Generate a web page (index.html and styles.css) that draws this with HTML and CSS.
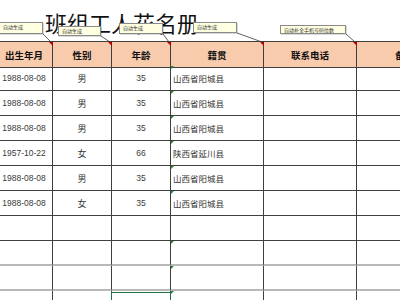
FILE: index.html
```html
<!DOCTYPE html>
<html lang="zh">
<head>
<meta charset="utf-8">
<title>班组工人花名册</title>
<link rel="stylesheet" href="styles.css">
</head>
<body>
<div class="sheet">
  <div class="title">班组工人花名册</div>
  <div class="grid">
    <div class="cell head note-mark">出生年月</div>
    <div class="cell head note-mark">性别</div>
    <div class="cell head note-mark">年龄</div>
    <div class="cell head note-mark">籍贯</div>
    <div class="cell head note-mark">联系电话</div>
    <div class="cell head">备注</div>

    <div class="cell date">1988-08-08</div><div class="cell c">男</div><div class="cell num">35</div><div class="cell place tri">山西省阳城县</div><div class="cell"></div><div class="cell"></div>
    <div class="cell date">1988-08-08</div><div class="cell c">男</div><div class="cell num">35</div><div class="cell place tri">山西省阳城县</div><div class="cell"></div><div class="cell"></div>
    <div class="cell date">1988-08-08</div><div class="cell c">男</div><div class="cell num">35</div><div class="cell place tri">山西省阳城县</div><div class="cell"></div><div class="cell"></div>
    <div class="cell date">1957-10-22</div><div class="cell c">女</div><div class="cell num">66</div><div class="cell place tri">陕西省延川县</div><div class="cell"></div><div class="cell"></div>
    <div class="cell date">1988-08-08</div><div class="cell c">男</div><div class="cell num">35</div><div class="cell place tri">山西省阳城县</div><div class="cell"></div><div class="cell"></div>
    <div class="cell date">1988-08-08</div><div class="cell c">女</div><div class="cell num">35</div><div class="cell place tri">山西省阳城县</div><div class="cell"></div><div class="cell"></div>
    <div class="cell"></div><div class="cell"></div><div class="cell"></div><div class="cell place"></div><div class="cell"></div><div class="cell"></div>
    <div class="cell light"></div><div class="cell light"></div><div class="cell light"></div><div class="cell light place tri"></div><div class="cell light"></div><div class="cell light"></div>
    <div class="cell light"></div><div class="cell light"></div><div class="cell light"></div><div class="cell light place tri"></div><div class="cell light"></div><div class="cell light"></div>
    <div class="cell light"></div><div class="cell light"></div><div class="cell light"></div><div class="cell light place tri"></div><div class="cell light"></div><div class="cell light"></div>
    <div class="cell"></div><div class="cell"></div><div class="cell"></div><div class="cell place tri"></div><div class="cell"></div><div class="cell"></div>
  </div>

  <svg class="leaders" width="400" height="300" viewBox="0 0 400 300">
    <line x1="43" y1="34" x2="51" y2="42"/>
    <line x1="101" y1="36" x2="110" y2="42"/>
    <line x1="163" y1="34" x2="169" y2="42"/>
    <line x1="237" y1="33" x2="262" y2="42"/>
    <line x1="346" y1="34" x2="355" y2="42"/>
  </svg>

  <div class="note n1">自动生成</div>
  <div class="note n2">自动生成</div>
  <div class="note n3">自动生成</div>
  <div class="note n4">自动生成</div>
  <div class="note n5">自动补全手机号码位数</div>

  <div class="selected"></div>
</div>
</body>
</html>
```
FILE: styles.css
```css
html, body {
  margin: 0;
  padding: 0;
  background: #ffffff;
}

.sheet {
  position: relative;
  width: 400px;
  height: 300px;
  overflow: hidden;
  font-family: "Noto Sans CJK SC", "Liberation Sans", sans-serif;
  color: #333333;
}

.title {
  height: 41px;
  box-sizing: border-box;
  padding: 9px 0 0 45px;
  font-size: 22px;
  line-height: 26px;
  color: #111111;
  white-space: nowrap;
}

.grid {
  display: grid;
  grid-template-columns: 57px 59px 59px 93px 93px 96px;
  grid-auto-rows: 25px;
  margin-left: -4px;
  width: 457px;
}

.cell {
  position: relative;
  box-sizing: border-box;
  border-right: 1px solid #3f3f3f;
  border-bottom: 1px solid #3f3f3f;
  display: flex;
  align-items: center;
  justify-content: center;
  font-size: 9px;
  white-space: nowrap;
}

.cell.light {
  border-bottom: 2px solid #b9b9b9;
}

.head {
  height: 27px;
  border-top: 1px solid #3f3f3f;
  background: #f8cbad;
  color: #111111;
  font-weight: 700;
  font-size: 9.5px;
}

.date,
.num {
  font-family: "Liberation Sans", "Noto Sans CJK SC", sans-serif;
  font-size: 8.5px;
  color: #3a3a3a;
}

.place {
  justify-content: flex-start;
  padding-left: 2px;
  font-size: 8.5px;
}

.tri::before {
  content: "";
  position: absolute;
  top: 0;
  left: 0;
  border-top: 3px solid #1f8a3a;
  border-right: 3px solid transparent;
}

.note-mark::after {
  content: "";
  position: absolute;
  top: 0;
  right: -1px;
  border-top: 4px solid #b00000;
  border-left: 4px solid transparent;
}

.leaders {
  position: absolute;
  left: 0;
  top: 0;
}

.leaders line {
  stroke: #3a3a3a;
  stroke-width: 0.8;
}

.note {
  position: absolute;
  box-sizing: border-box;
  background: #ffffe1;
  border: 1px solid #8a8a8a;
  box-shadow: 1px 1px 0 rgba(0, 0, 0, 0.15);
  font-size: 5px;
  line-height: 8px;
  padding-left: 3px;
  color: #333333;
  white-space: nowrap;
  overflow: hidden;
}

.n1 { left: -1px; top: 22px; width: 44px; height: 12px; }
.n2 { left: 58px; top: 26px; width: 43px; height: 10px; }
.n3 { left: 119px; top: 23px; width: 44px; height: 11px; }
.n4 { left: 193px; top: 22px; width: 44px; height: 11px; }
.n5 { left: 280px; top: 25px; width: 66px; height: 9px; }

.selected {
  position: absolute;
  left: 111px;
  top: 292px;
  width: 60px;
  height: 20px;
  box-sizing: border-box;
  border: 1px solid #217346;
}
```
